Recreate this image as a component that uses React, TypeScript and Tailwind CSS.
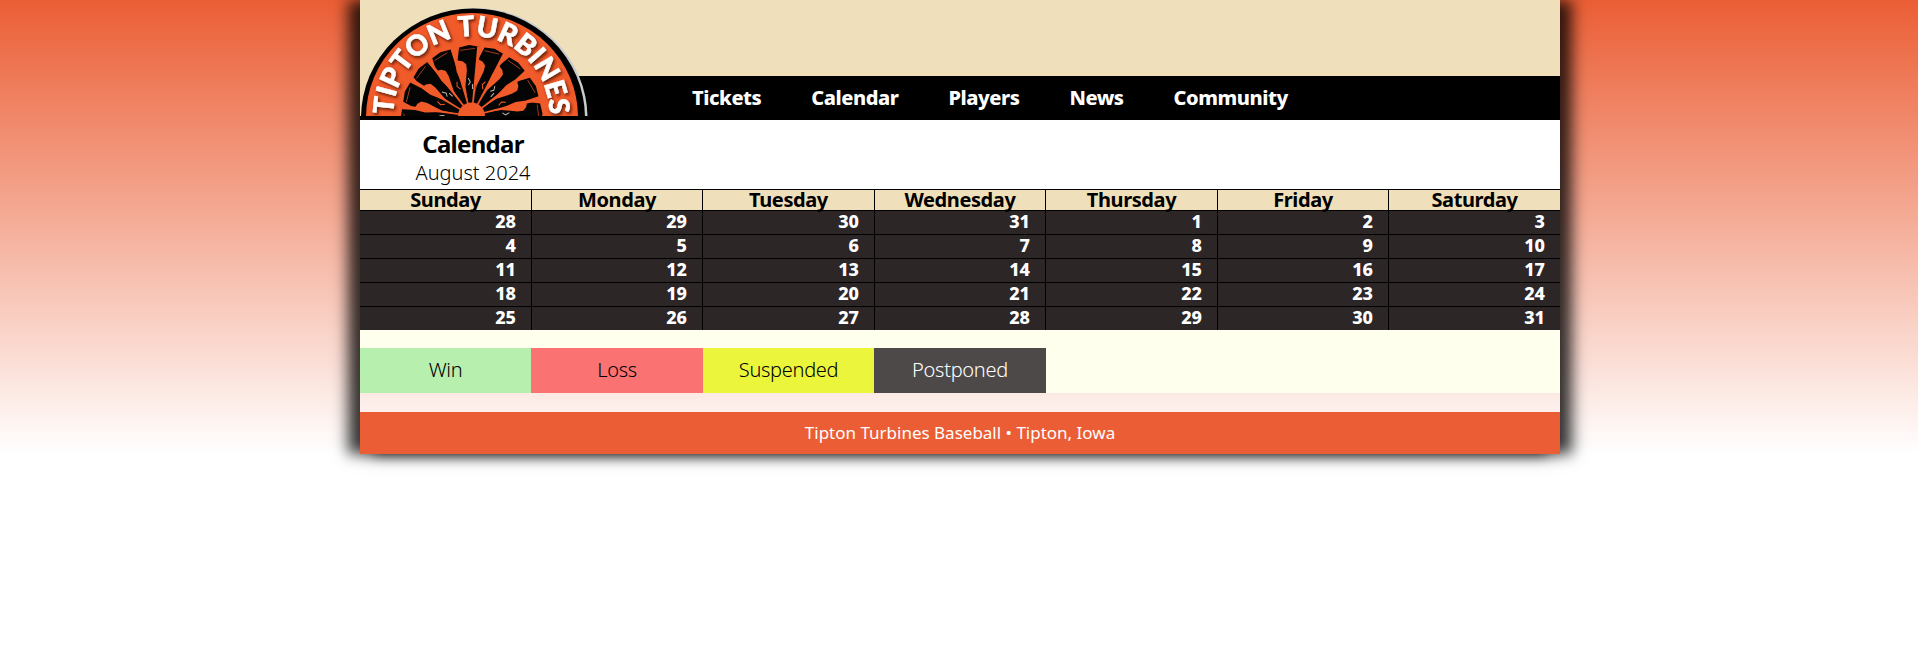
const navItems = ["Tickets", "Calendar", "Players", "News", "Community"];
const dayNames = ["Sunday", "Monday", "Tuesday", "Wednesday", "Thursday", "Friday", "Saturday"];
const weeks = [
  [28, 29, 30, 31, 1, 2, 3],
  [4, 5, 6, 7, 8, 9, 10],
  [11, 12, 13, 14, 15, 16, 17],
  [18, 19, 20, 21, 22, 23, 24],
  [25, 26, 27, 28, 29, 30, 31],
];
const legend = [
  { label: "Win", style: "bg-[#b7efae] text-black" },
  { label: "Loss", style: "bg-[#fa7272] text-black" },
  { label: "Suspended", style: "bg-[#eaf53c] text-black" },
  { label: "Postponed", style: "bg-[#4d4948] text-white" },
];
const columns = "grid grid-cols-[171px_171px_172px_171px_172px_171px_172px]";

// Rotation of each turbine blade and of the gaps between them, clockwise from straight up.
const blades = [-93, -70, -48, -26, -2, 19, 41, 65, 88];
const gaps = [-82, -59, -38, -16, 6, 28, 52, 76];

function Logo() {
  return (
    <svg className="absolute left-0 top-0" width="232" height="116" viewBox="0 0 232 116" role="img" aria-label="Tipton Turbines">
      <rect width="112" height="116" fill="#efdfba" />
      <ellipse cx="115" cy="118" rx="112.5" ry="110" fill="#c9cccf" />
      <ellipse cx="113" cy="118" rx="112" ry="109.5" fill="#000" />
      <ellipse cx="112" cy="117" rx="106" ry="104" fill="#f15a29" />
      <g transform="translate(111.5 116)">
        {blades.map((angle, i) => (
          <g key={angle} transform={`rotate(${angle})`}>
            <path
              d="M-10 -69 L0 -71 L10.5 -69 L9 -56 L6 -46 L5.5 -30 L2.8 -12 L-2.8 -12 L-5 -30 L-3 -46 L-3.5 -52 L-7 -55 L-12 -56 Z"
              fill="#050505"
            />
            <path d="M-9 -66 L6 -67.5" stroke="#f15a29" strokeWidth="0.6" />
            {i % 2 === 0 && <path d="M-2 -38 l2 4 l-2 3 M2 -32 v5" stroke="#b9b4b0" strokeWidth="1" fill="none" />}
            {i % 2 === 1 && <path d="M2 -37 l-2 4 l2 4" stroke="#f15a29" strokeWidth="1" fill="none" />}
          </g>
        ))}
        {gaps.map((angle) => (
          <path key={angle} transform={`rotate(${angle})`} d="M-0.8 -12 L-1.6 -70 L1.6 -70 L0.8 -12 Z" fill="#f15a29" />
        ))}
        <circle r="13.5" fill="#f15a29" />
      </g>
      <defs>
        <path id="logo-arc" d="M33.5 114 A78 78 0 0 1 189.5 114" />
        <filter id="logo-shadow" x="-10%" y="-10%" width="120%" height="120%">
          <feDropShadow dx="1.5" dy="2" stdDeviation="1.5" floodColor="#3a0f00" floodOpacity="0.8" />
        </filter>
      </defs>
      <text
        className="font-[Lato,sans-serif] text-[28px] font-black"
        fill="#fff"
        stroke="#fff"
        strokeWidth="0.5"
        filter="url(#logo-shadow)"
        textAnchor="middle"
      >
        <textPath href="#logo-arc" startOffset="50%">TIPTON TURBINES</textPath>
      </text>
    </svg>
  );
}

export default function App() {
  return (
    <div className="min-h-screen overflow-hidden bg-white font-['Noto_Sans',sans-serif] text-black">
      <div className="h-[454px] bg-[linear-gradient(to_bottom,#eb5e35,#ffffff)] pl-[360px]">
        <div className="w-[1200px] shadow-[-12px_0_14px_rgba(0,0,0,0.78),12px_0_14px_rgba(0,0,0,0.78)]">
          <header className="relative">
            <div className="h-[76px] bg-[#efdfba]" />
            <nav className="flex h-11 items-center gap-[50px] bg-black pb-px pl-[332px] text-[20px] font-extrabold tracking-[-0.45px] text-white">
              {navItems.map((item) => (
                <a key={item}>{item}</a>
              ))}
            </nav>
            <Logo />
          </header>
          <main>
            <div className="h-[69px] bg-white pl-[55px] pt-[7px]">
              <div className="w-[116px] text-center whitespace-nowrap">
                <h1 className="text-[24px] leading-[34px] font-bold tracking-[-0.7px]">Calendar</h1>
                <p className="text-[20px] leading-6 font-light">August 2024</p>
              </div>
            </div>
            <div className={`${columns} h-[21px] border-t border-black bg-[#efdfba]`}>
              {dayNames.map((day) => (
                <div key={day} className="border-l border-black text-center text-[20px] leading-[19px] font-bold tracking-[-0.4px] first:border-l-0">
                  {day}
                </div>
              ))}
            </div>
            {weeks.map((week) => (
              <div key={week[0]} className={`${columns} h-6 border-t border-black bg-[#2c2626]`}>
                {week.map((day) => (
                  <div key={day} className="border-l border-black pr-[15px] text-right text-[18px] leading-[21px] font-extrabold text-white first:border-l-0">
                    {day}
                  </div>
                ))}
              </div>
            ))}
            <div className="bg-[#ffffee] pt-[18px]">
              <div className="grid grid-cols-[171px_172px_171px_172px]">
                {legend.map(({ label, style }) => (
                  <div key={label} className={`h-[45px] text-center text-[20px] leading-[43px] font-light tracking-[-0.3px] ${style}`}>
                    {label}
                  </div>
                ))}
              </div>
            </div>
          </main>
          <footer className="mt-[19px] h-[42px] bg-[#eb5e35] text-center text-[17px] leading-[41px] text-white">
            Tipton Turbines Baseball • Tipton, Iowa
          </footer>
        </div>
      </div>
    </div>
  );
}
